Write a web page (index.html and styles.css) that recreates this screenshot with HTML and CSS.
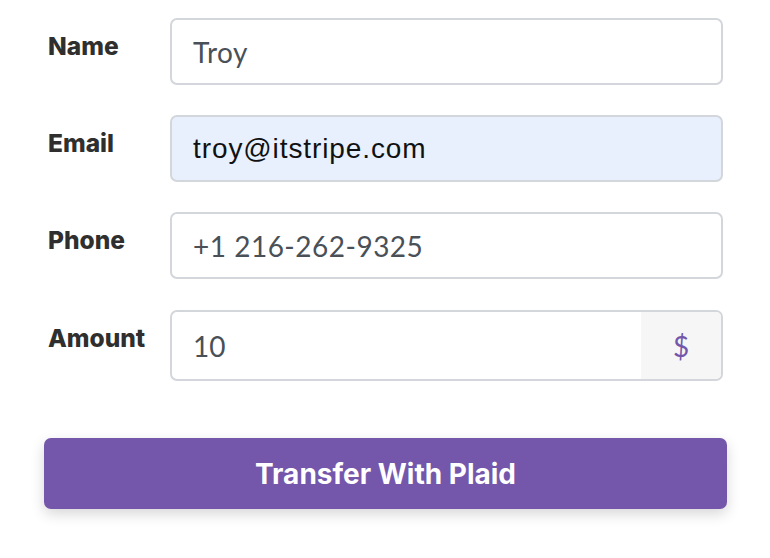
FILE: index.html
```html
<!DOCTYPE html>
<html lang="en">
<head>
<meta charset="utf-8">
<title>Transfer With Plaid</title>
<link rel="stylesheet" href="styles.css">
</head>
<body>
<form class="form">
  <div class="row">
    <div class="label">Name</div>
    <div class="field">Troy</div>
  </div>
  <div class="row">
    <div class="label">Email</div>
    <div class="field field-autofill">troy@itstripe.com</div>
  </div>
  <div class="row">
    <div class="label">Phone</div>
    <div class="field">+1 216-262-9325</div>
  </div>
  <div class="row">
    <div class="label">Amount</div>
    <div class="group">
      <div class="group-input">10</div>
      <div class="addon">$</div>
    </div>
  </div>
  <div class="actions">
    <button type="button" class="btn">Transfer With Plaid</button>
  </div>
</form>
</body>
</html>
```

FILE: styles.css
```css
html, body {
  margin: 0;
  padding: 0;
  background: #ffffff;
}

.form {
  display: flex;
  flex-direction: column;
  padding: 18px 43px 40px 44px;
}

.row {
  display: flex;
  align-items: flex-start;
  margin-bottom: 30px;
}

.row:nth-child(3) {
  margin-bottom: 31px;
}

.row:nth-child(4) {
  margin-bottom: 0;
}

.label {
  box-sizing: border-box;
  width: 126px;
  padding: 14px 0 0 4px;
  font-family: Inter, "Liberation Sans", sans-serif;
  font-weight: 800;
  font-size: 24.5px;
  line-height: 29px;
  color: #2f2f2f;
}

.field {
  flex: 1;
  margin-right: 4px;
  height: 67px;
  box-sizing: border-box;
  border: 2px solid #d3d6da;
  border-radius: 7px;
  padding: 0 21px;
  display: flex;
  align-items: center;
  font-family: Lato, "Liberation Sans", sans-serif;
  font-size: 28px;
  letter-spacing: 0.5px;
  color: #495057;
}

.field-autofill {
  background: #e8f0fe;
  color: #111111;
  font-family: "Liberation Sans", Arial, sans-serif;
  letter-spacing: 0.9px;
}

.group {
  flex: 1;
  margin-right: 4px;
  height: 71px;
  box-sizing: border-box;
  border: 2px solid #d3d6da;
  border-radius: 7px;
  display: flex;
  overflow: hidden;
}

.group-input {
  flex: 1;
  display: flex;
  align-items: center;
  padding: 0 21px;
  font-family: Lato, "Liberation Sans", sans-serif;
  font-size: 28px;
  color: #495057;
}

.addon {
  width: 80px;
  background: #f6f6f6;
  display: flex;
  align-items: center;
  justify-content: center;
  font-family: Lato, "Liberation Sans", sans-serif;
  font-size: 28px;
  color: #7456ab;
}

.actions {
  margin-top: 57px;
}

.btn {
  display: block;
  width: 100%;
  height: 71px;
  border: none;
  border-radius: 7px;
  background: #7456ab;
  color: #ffffff;
  font-family: Inter, "Liberation Sans", sans-serif;
  font-weight: 700;
  font-size: 28px;
  letter-spacing: 0;
  box-shadow: 0 5px 14px rgba(0, 0, 0, 0.16);
  cursor: pointer;
}
```
